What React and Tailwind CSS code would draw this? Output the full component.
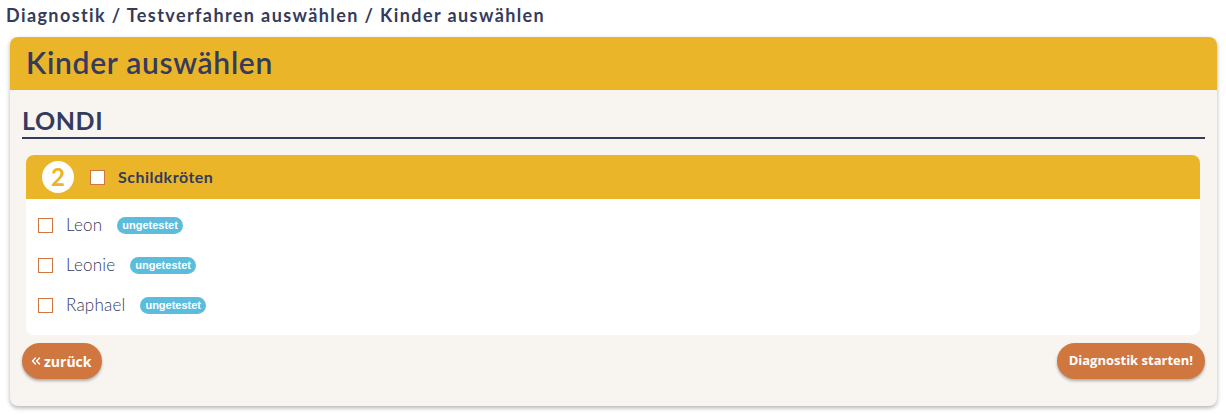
import React from 'react';
import { ChevronsLeft } from 'lucide-react';

const children = ['Leon', 'Leonie', 'Raphael'];

const Box = ({ className = '' }) => (
  <span className={`inline-block w-[15px] h-[15px] border border-[#d0773f] bg-white shrink-0 ${className}`} />
);

export default function App() {
  return (
    <div className="min-h-[415px] bg-white font-['Lato','Noto_Sans',sans-serif] text-[#343b5c]">
      <div className="px-[6px] pt-[2px] h-[37px] text-[18px] font-bold tracking-[1.4px] leading-[26px]">
        Diagnostik / Testverfahren auswählen / Kinder auswählen
      </div>

      <div className="mx-[10px] mr-[9px] rounded-lg bg-[#f8f5f1] shadow-[0_2px_4px_rgba(0,0,0,0.3)] overflow-hidden">
        <div className="h-[53px] bg-[#ebb52a] flex items-center px-[16px]">
          <h1 className="text-[30px] font-semibold leading-none pb-[3px] tracking-[0.7px]">Kinder auswählen</h1>
        </div>

        <div className="px-[12px] pt-[18px] pb-[27px]">
          <h2 className="text-[25px] font-bold leading-none pb-[4px] border-b-2 border-[#343b5c] tracking-[0.6px]">LONDI</h2>

          <div className="mt-[16px] mx-[4px] mr-[5px] rounded-lg bg-white overflow-hidden">
            <div className="h-[44px] bg-[#ebb52a] flex items-center pl-[16px]">
              <span className="w-[32px] h-[32px] rounded-full bg-white text-[#ebb52a] font-bold text-[24px] flex items-center justify-center leading-none">2</span>
              <Box className="ml-[16px]" />
              <span className="ml-[13px] text-[16px] font-bold tracking-[0.5px]">Schildkröten</span>
            </div>
            <div className="pt-[6px] pb-[10px]">
              {children.map((name) => (
                <div key={name} className="h-[40px] flex items-center pl-[12px]">
                  <Box />
                  <span className="ml-[13px] text-[17px] font-light tracking-[0.2px]">{name}</span>
                  <span className="ml-[15px] px-[5px] h-[17px] leading-[17px] rounded-full bg-[#5bbcdc] text-white text-[11px] font-bold font-['Liberation_Sans',sans-serif]">ungetestet</span>
                </div>
              ))}
            </div>
          </div>

          <div className="mt-[8px] flex justify-between">
            <button className="h-[36px] pl-[7px] pr-[11px] rounded-full bg-[#d0773f] text-white text-[14px] font-bold font-['Open_Sans',sans-serif] shadow-[0_2px_3px_rgba(0,0,0,0.3)] flex items-center">
              <ChevronsLeft size={14} strokeWidth={2.5} className="mr-[1px]" />zurück
            </button>
            <button className="h-[36px] px-[12px] rounded-full bg-[#d0773f] text-white text-[13px] font-bold font-['Open_Sans',sans-serif] shadow-[0_2px_3px_rgba(0,0,0,0.3)]">
              Diagnostik starten!
            </button>
          </div>
        </div>
      </div>
    </div>
  );
}
